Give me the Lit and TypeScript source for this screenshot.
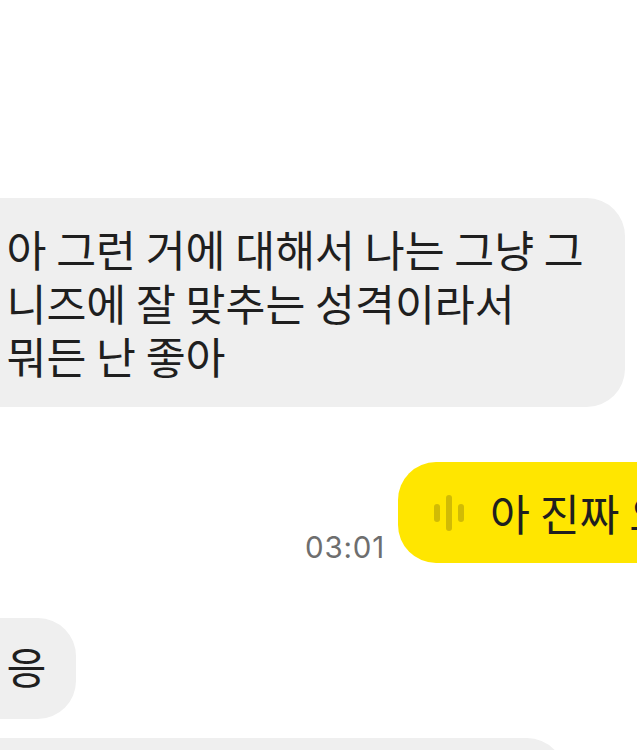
import { LitElement, html, css } from "lit";
import { customElement } from "lit/decorators.js";

@customElement("app-root")
export class AppRoot extends LitElement {
  static styles = css`
    :host { display: block; width: 637px; height: 750px; overflow: hidden; background: #fff;
      font-family: "Noto Sans CJK KR", "Liberation Sans", sans-serif; font-weight: 400; color: #1f1f1f; }
    .chat { display: flex; flex-direction: column; padding-top: 198px; width: 637px; }
    .row { display: flex; align-items: flex-end; }
    .bubble { border-radius: 38px; font-size: 43.4px; line-height: 53.5px; box-sizing: border-box; flex: none; white-space: pre; }
    .in { background: #efefef; margin-left: -40px; padding-left: 46.5px; }
    .first { width: 665px; height: 209px; padding-top: 24px; margin-bottom: 55px; }
    .out { margin-bottom: 55px; height: 101px; width: 637px; padding-left: 305px; box-sizing: border-box; }
    .time { font-family: "Inter", "Liberation Sans", sans-serif; font-weight: 400; font-size: 29.5px; line-height: 32px; letter-spacing: 0.8px; color: #6e6e6e; flex: none; width: 93px; }
    .yellow { background: #ffe600; height: 101px; display: flex; align-items: center; gap: 26px; padding-left: 36px; width: 300px; }
    .yellow svg { flex: none; display: block; }
    .ack { width: 115.5px; height: 101px; padding-top: 21px; margin-bottom: 19px; }
    .last { width: 605px; height: 100px; }
  `;
  render() {
    return html`<div class="chat">
      <div class="bubble in first">아 그런 거에 대해서 나는 그냥 그
니즈에 잘 맞추는 성격이라서
뭐든 난 좋아</div>
      <div class="row out">
        <span class="time">03:01</span>
        <div class="bubble yellow">
          <svg width="30" height="36" viewBox="0 0 30 36" fill="#d1bb05">
            <rect x="0" y="9" width="6" height="18" rx="3"></rect>
            <rect x="12" y="0" width="6" height="36" rx="3"></rect>
            <rect x="24" y="9" width="6" height="18" rx="3"></rect>
          </svg>
          <span>아 진짜 오</span>
        </div>
      </div>
      <div class="bubble in ack">응</div>
      <div class="bubble in last"></div>
    </div>`;
  }
}
